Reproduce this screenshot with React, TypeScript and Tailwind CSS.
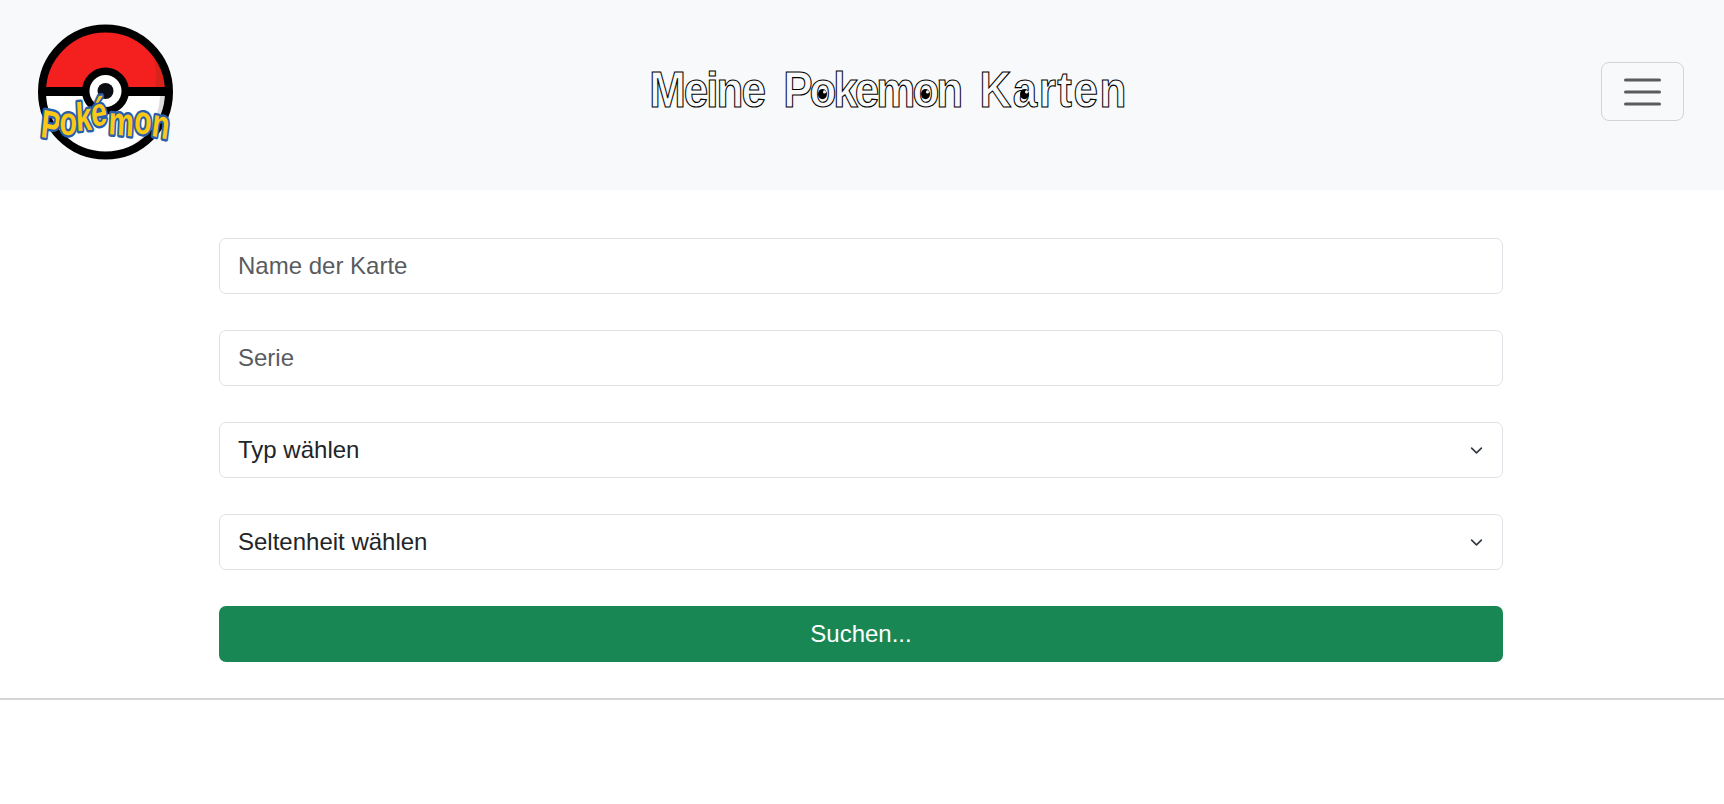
import React from "react";

const font = { fontFamily: '"Liberation Sans", Arial, sans-serif' };

function Logo() {
  return (
    <svg width="140" height="140" viewBox="0 0 140 140" className="block shrink-0">
      <defs>
        <clipPath id="ball">
          <circle cx="69.5" cy="70" r="64" />
        </clipPath>
      </defs>
      <g clipPath="url(#ball)">
        <rect width="140" height="70" fill="#f3201f" />
        <path d="M96 0 C116 18 124 44 118 70 L140 70 L140 0 Z" fill="#d8231c" />
        <rect y="70" width="140" height="70" fill="#ffffff" />
        <path d="M124 72 C124 100 106 124 74 134 L140 140 L140 72 Z" fill="#dcdcdc" />
      </g>
      <circle cx="69.5" cy="70" r="63.5" fill="none" stroke="#000" strokeWidth="8" />
      <rect x="6" y="65" width="127" height="9" fill="#000" />
      <circle cx="69.5" cy="69" r="23.5" fill="#000" />
      <circle cx="69.5" cy="69" r="16" fill="#fff" />
      <circle cx="69.5" cy="69" r="8" fill="#0c0c14" />
      <text
        transform="translate(4 0) scale(1 1.4)"
        x="0"
        y="82"
        dy="0 -2 -2 -3 5 -1 2"
        rotate="8 4 -4 -8 4 6 10"
        fontFamily='"Liberation Sans", sans-serif'
        fontWeight="700"
        fontSize="28.5"
        fill="#fbc913"
        stroke="#2a5fa8"
        strokeWidth="3.5"
        paintOrder="stroke"
        strokeLinejoin="round"
      >
        Pokémon
      </text>
    </svg>
  );
}

function Eye({ className }: { className: string }) {
  return (
    <span className={`absolute w-[9px] h-[9px] rounded-full bg-black ${className}`}>
      <span className="absolute right-[1px] top-[1px] w-[3px] h-[3px] rounded-full bg-[#f8f9fa]" />
    </span>
  );
}

function Title() {
  return (
    <h1
      className="text-[44px] leading-[50px] font-bold text-[#f8f9fa] whitespace-pre scale-y-[1.12] origin-[50%_80%] [word-spacing:7px] [-webkit-text-stroke:1px_#000]"
      style={font}
    >
      <span className="tracking-[-2px]">Meine</span>{" "}
      <span className="relative inline-block tracking-[-3px]">
        Pokemon
        <Eye className="left-[35px] bottom-[17px]" />
        <Eye className="left-[138px] bottom-[17px]" />
      </span>{" "}
      <span className="relative inline-block tracking-[1.5px]">
        Karten
        <Eye className="left-[41px] bottom-[17px]" />
      </span>
    </h1>
  );
}

function Field({ placeholder }: { placeholder: string }) {
  return (
    <input
      placeholder={placeholder}
      className="block w-full h-[56px] rounded-[7px] border border-[#dee2e6] bg-white px-[18px] text-[24px] text-[#212529] placeholder:text-[#595c5f] outline-none"
      style={font}
    />
  );
}

function SelectBox({ label }: { label: string }) {
  return (
    <div className="flex items-center justify-between w-full h-[56px] rounded-[7px] border border-[#dee2e6] bg-white pl-[18px] pr-[19px] text-[24px] text-[#212529]">
      <span>{label}</span>
      <svg width="13" height="13" viewBox="0 0 16 16" fill="none">
        <path d="m2 5 6 6 6-6" stroke="#343a40" strokeWidth="2" strokeLinecap="round" strokeLinejoin="round" />
      </svg>
    </div>
  );
}

export default function App() {
  return (
    <div className="min-h-screen bg-white" style={font}>
      <nav className="flex items-center justify-between h-[190px] bg-[#f8f9fa] pl-[36px] pr-[40px] pb-[7px]">
        <Logo />
        <Title />
        <button className="flex items-center justify-center w-[83px] h-[59px] rounded-[8px] border border-[#d3d4d5]">
          <svg width="37" height="28" viewBox="0 0 37 28" fill="none">
            <path d="M1.5 2H35.5M1.5 14H35.5M1.5 26H35.5" stroke="#595c5f" strokeWidth="3" strokeLinecap="round" />
          </svg>
        </button>
      </nav>
      <form className="flex flex-col gap-[36px] mx-[219px] w-[1284px] pt-[48px] pb-[36px]">
        <Field placeholder="Name der Karte" />
        <Field placeholder="Serie" />
        <SelectBox label="Typ wählen" />
        <SelectBox label="Seltenheit wählen" />
        <button
          type="button"
          className="h-[56px] w-full rounded-[7px] bg-[#198754] text-white text-[24px]"
        >
          Suchen...
        </button>
      </form>
      <hr className="border-0 border-t-2 border-[#d5d5d5]" />
    </div>
  );
}
